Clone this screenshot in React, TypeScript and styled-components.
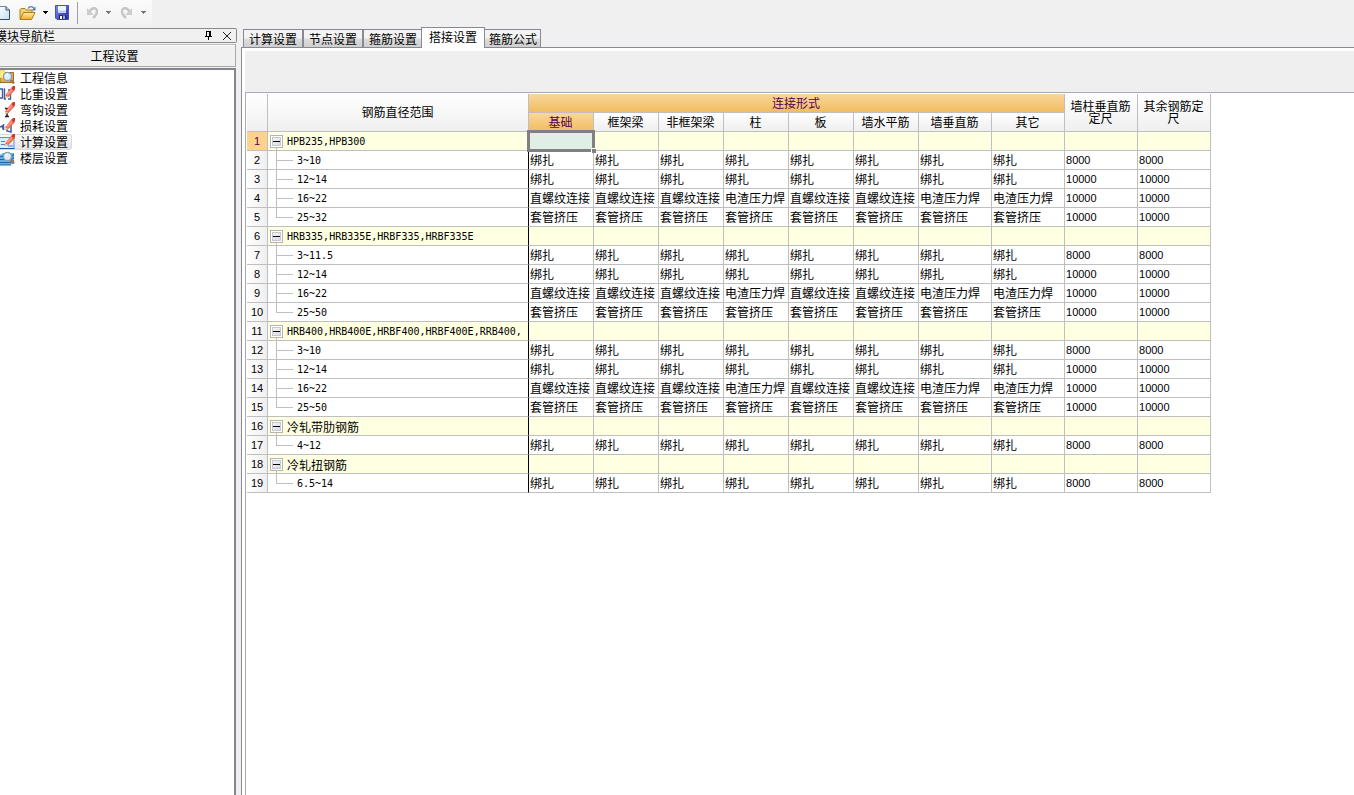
import React, { useState } from "react";
import styled, { createGlobalStyle, css } from "styled-components";

const LINE = "#bfbfbf";
const EDGE = "#888a93";
const HILITE = "linear-gradient(#f9d79a, #f0bd60)";

const GlobalStyle = createGlobalStyle`
  * { box-sizing: border-box; }
  body {
    margin: 0;
    background: #f0f0f0;
    color: #000;
    font: 12px/16px "Noto Sans CJK SC", sans-serif;
  }
  button {
    margin: 0;
    padding: 0;
    border: 0;
    background: none;
    color: inherit;
    font: inherit;
    white-space: nowrap;
  }
`;

const Shell = styled.div`
  display: flex;
  flex-direction: column;
  min-height: 100vh;
  overflow: hidden;
`;

const Toolbar = styled.div`
  display: flex;
  align-items: center;
  align-self: flex-start;
  width: 152px;
  height: 25px;
  margin-bottom: 2px;
  border-radius: 0 2px 2px 0;
  background: linear-gradient(#fbfbfb, #f2f2f2);
`;

const ToolButton = styled.button<{ $width: number }>`
  display: flex;
  flex: none;
  align-items: center;
  justify-content: center;
  width: ${(p) => p.$width}px;
  height: 24px;
  svg { flex: none; display: block; }
`;

const Separator = styled.div`
  flex: none;
  width: 1px;
  height: 22px;
  margin-right: 7px;
  background: #a0a0a0;
`;

const Main = styled.div`
  display: grid;
  flex: 1;
  grid-template-columns: 237px minmax(0, 1fr);
  column-gap: 4px;
`;

const Sidebar = styled.aside`
  display: flex;
  flex-direction: column;
  gap: 1px;
  min-width: 0;
  padding-top: 1px;
`;

const DockTitle = styled.header`
  display: flex;
  align-items: center;
  height: 15px;
  padding-right: 4px;
  border: 1px solid #8a8a8a;
  border-left: 0;
  border-radius: 0 2px 2px 0;
`;

const DockName = styled.h2`
  flex: 1;
  margin: 0 0 0 -5px;
  font-size: 12px;
  font-weight: 400;
  line-height: 12px;
`;

const DockButton = styled.button`
  width: 10px;
  height: 11px;
  margin-left: 8px;
  svg { display: block; }
`;

const GroupButton = styled.button`
  width: 236px;
  height: 23px;
  padding-right: 6px;
  border: 1px solid #a8a8a8;
  border-left: 0;
  border-top-color: #bcbcbc;
  box-shadow: inset 0 1px #fff;
`;

const Tree = styled.nav`
  display: flex;
  flex: 1;
  flex-direction: column;
  align-items: flex-start;
  width: 236px;
  border-top: 2px solid #83868f;
  border-right: 2px solid #83868f;
  background: #fff;
`;

const TreeItem = styled.button<{ $active: boolean }>`
  display: flex;
  align-items: center;
  gap: 4px;
  height: 16px;
  padding-right: 3px;
  border: 1px solid transparent;
  border-left: 0;
  border-radius: 0 3px 3px 0;
  svg { display: block; }
  ${(p) =>
    p.$active &&
    css`
      border-color: #d9d9d9;
      background: linear-gradient(#fafafa, #e6e6e6);
    `}
`;

const Workspace = styled.main`
  display: flex;
  flex-direction: column;
  min-width: 0;
`;

const TabStrip = styled.div`
  display: flex;
  align-items: flex-end;
  height: 20px;
  padding-left: 2px;
`;

const Tab = styled.button<{ $active: boolean }>`
  height: 18px;
  padding: 0 5px;
  border: 1px solid ${EDGE};
  border-bottom: 0;
  background: linear-gradient(#f3f3f3 45%, #dcdcdc 55%, #cfcfcf);
  line-height: 16px;
  &:last-child { padding-right: 3px; }
  ${(p) =>
    p.$active &&
    css`
      z-index: 1;
      height: 21px;
      margin: 0 -2px -1px;
      padding: 0 7px 2px;
      background: #fff;
    `}
`;

const TabPage = styled.section`
  display: flex;
  flex: 1;
  flex-direction: column;
  padding: 3px 0 0 3px;
  border: solid ${EDGE};
  border-width: 1px 0 0 1px;
  background: #fff;
`;

const OptionsBar = styled.div`
  height: 41px;
  background: #efefef;
`;

const GridFrame = styled.div`
  flex: 1;
  padding: 1px 0 0 1px;
  border: solid #a9aab3;
  border-width: 1px 0 0 1px;
  overflow: hidden;
`;

const Grid = styled.table`
  width: 964px;
  table-layout: fixed;
  border-collapse: separate;
  border-spacing: 0;
`;

const HeadCell = styled.th<{ $hot?: boolean }>`
  height: 19px;
  padding: 0 5px 1px 4px;
  border: solid ${LINE};
  border-width: 0 1px 1px 0;
  background: ${(p) => (p.$hot ? HILITE : "linear-gradient(#ffffff, #efefef)")};
  color: ${(p) => (p.$hot ? "#550055" : "#000")};
  font-weight: 400;
  line-height: 12px;
`;

const RowNumber = styled.th<{ $hot: boolean }>`
  height: 19px;
  padding: 0;
  border: solid ${LINE};
  border-width: 0 1px 1px 0;
  background: ${(p) => (p.$hot ? "#ffd28c" : "linear-gradient(90deg, #ffffff, #efefef)")};
  color: ${(p) => (p.$hot ? "#550055" : "#000")};
  font: 11px/18px "Liberation Sans", sans-serif;
`;

const Cell = styled.td<{ $group: boolean; $frozen?: boolean; $number?: boolean; $picked?: boolean }>`
  position: relative;
  height: 19px;
  padding: 0 0 0 1px;
  border: solid ${LINE};
  border-width: 0 1px 1px 0;
  ${(p) => p.$frozen && "border-right-color: #000;"}
  background: ${(p) => (p.$picked ? "#e0efe6" : p.$group ? "#ffffe1" : "#fff")};
  line-height: 18px;
  white-space: nowrap;
  ${(p) => p.$number && `font: 11px/18px "Liberation Sans", sans-serif;`}
`;

const Range = styled.div`
  display: flex;
  height: 18px;
  padding-left: 1px;
  font: 10px/20px "DejaVu Sans Mono", "Noto Sans CJK SC", monospace;
  svg { flex: none; display: block; }
`;

const RangeText = styled.span<{ $cjk?: boolean }>`
  margin-left: 4px;
  ${(p) => p.$cjk && `font: 12px/19px "Noto Sans CJK SC", sans-serif;`}
`;

const Knot = styled.div`
  display: flex;
  flex-direction: column;
  align-items: center;
  padding-top: 3px;
`;

const Stem = styled.div`
  width: 1px;
  height: 2px;
  background: ${LINE};
`;

const Expander = styled.button`
  display: grid;
  place-items: center;
  width: 13px;
  height: 13px;
  border: 1px solid #b4b4b8;
  background: linear-gradient(135deg, #ffffff, #cfd2da);
  box-shadow: inset 0 0 0 1px #fff, inset 0 0 0 2px #c6c8ce;
`;

const Dash = styled.span`
  width: 7px;
  height: 1px;
  background: #000;
`;

const Cursor = styled.div`
  position: absolute;
  z-index: 1;
  inset: -2px;
  border: 3px solid #808080;
`;

const FillHandle = styled.div`
  position: absolute;
  z-index: 2;
  right: -3px;
  bottom: -3px;
  width: 5px;
  height: 5px;
  border: solid #fff;
  border-width: 1px 0 0 1px;
  background: #808080;
`;

const Arrow = ({ color }: { color: string }) => (
  <svg width="5" height="3" shapeRendering="crispEdges"><path d="M0 0h5v1H0zM1 1h3v1H1zM2 2h1v1H2z" fill={color} /></svg>
);

const NewIcon = () => (
  <svg width="11" height="16" viewBox="0 0 11 16">
    <defs><linearGradient id="sheet" x2="1" y2="1"><stop stopColor="#fff" /><stop offset="1" stopColor="#c6dcf0" /></linearGradient></defs>
    <path d="M-2 1.5H6L9.5 5v9.5H-2z" fill="url(#sheet)" stroke="#6d8cab" />
    <path d="M6 1.5V5h3.5M9.5 5v9.5H-2" fill="none" stroke="#2c5272" />
  </svg>
);

const OpenIcon = () => (
  <svg width="17" height="16" viewBox="0 0 17 16">
    <defs><linearGradient id="folder" x2="0" y2="1"><stop stopColor="#fff0a8" /><stop offset="1" stopColor="#efa92c" /></linearGradient></defs>
    <path d="M1 14V4.5l1-1h4l1.500 1.500H13V8" fill="#f3cf70" stroke="#a8802e" />
    <path d="M1 14.500L4.500 7.500H16L12.500 14.500z" fill="url(#folder)" stroke="#b07a1c" />
    <path d="M9 3.500C10.500 1 13.500 1 15 3.500" fill="none" stroke="#5c7ba5" strokeWidth="1.300" />
    <path d="M16.500 1.500V5.500H12.500z" fill="#5c7ba5" />
  </svg>
);

const SaveIcon = () => (
  <svg width="14" height="15" viewBox="0 0 14 15">
    <defs><linearGradient id="disk" x2="1" y2="1"><stop stopColor="#7d8df2" /><stop offset="1" stopColor="#272aa5" /></linearGradient></defs>
    <path d="M.5 .5h13v14H2L.5 13z" fill="url(#disk)" stroke="#4a4eb8" />
    <path d="M3 1h8v7H3z" fill="#f0f4ff" />
    <path d="M3 5.500h8v2.500H3z" fill="#c4cff2" />
    <path d="M4 10h7v4.500H4z" fill="#20266f" />
    <path d="M5 11h2v3H5z" fill="#fff" />
    <path d="M8 10.500h2v3.500H8z" fill="#9ca9d0" />
  </svg>
);

const TurnIcon = ({ flip }: { flip?: boolean }) => (
  <svg width="13" height="13" viewBox="0 0 13 13">
    <g transform={flip ? "matrix(-1 0 0 1 13 0)" : undefined}>
      <path d="M3.500 6C5.500 1 11 1 11 5.500C11 8.500 9.500 10 7 12" fill="none" stroke="#c6c6c6" strokeWidth="2.400" />
      <path d="M1 2v7h7z" fill="#cdcdcd" />
    </g>
  </svg>
);

const PinIcon = () => (
  <svg width="9" height="11" shapeRendering="crispEdges"><path d="M2 1h5v1H2zM2 1h1v5H2zM5 1h2v5H5zM1 6h7v1H1zM4 7h1v3H4z" /></svg>
);

const CloseIcon = () => (
  <svg width="10" height="11"><path d="M1 2l8 8M9 2l-8 8" stroke="#222" strokeWidth="1" /></svg>
);

const Pencil = () => (
  <g>
    <path d="M5 9.500L11 2L14.500 4.500L8.500 11L5 12z" fill="#f06a58" />
    <path d="M7 9L12.500 3" stroke="#ff9d8c" strokeWidth="1.400" />
    <path d="M11 2L13 0H15V3L14 5z" fill="#cf3c2a" />
    <path d="M5 9.500L8.500 11L5 12z" fill="#e9d0a8" />
  </g>
);

const Magnifier = () => (
  <g>
    <path d="M10.500 10L14 13.500" stroke="#a8743a" strokeWidth="2.400" />
    <circle cx="7.500" cy="6.500" r="4" fill="#dceefb" stroke="#8a9cb0" strokeWidth="1.300" />
    <path d="M5.500 6a2.500 2.500 0 0 1 2.500-2" fill="none" stroke="#fff" strokeWidth="1.400" />
  </g>
);

const navArt: Record<string, React.ReactNode> = {
  工程信息: (
    <>
      <path d="M0 2.500h13.500v10H0z" fill="#dfb04a" stroke="#94702a" />
      <path d="M0 0h5v8H0z" fill="#ffd23c" />
      <path d="M2 0v8M0 4h5M0 1l4 6M4 1L0 7" stroke="#fff3a5" />
      <Magnifier />
    </>
  ),
  比重设置: (
    <>
      <path d="M0 3h2.500v9H0M5 3H4M4.500 3v10M4 13h2M8 4h2.500v9H8" fill="none" stroke="#3c5f9a" strokeWidth="1.400" />
      <Pencil />
    </>
  ),
  弯钩设置: (
    <>
      <path d="M5 6.500h4M7 6.500v8M5 14.500h4" fill="none" stroke="#222" strokeWidth="1.600" />
      <Pencil />
    </>
  ),
  损耗设置: (
    <>
      <path d="M0 9l2-1 1.500 4V6M7 8v5l4 1V7" fill="none" stroke="#3c5f9a" strokeWidth="1.500" />
      <Pencil />
    </>
  ),
  计算设置: (
    <>
      <path d="M-1 3.500h15v11H-1z" fill="#dcecff" stroke="#5b91de" />
      <path d="M1 7.500h4M1 10.500h4M8 12h5" stroke="#4b82cf" />
      <path d="M-1 14.500h15.500" stroke="#1f56a8" />
      <Pencil />
    </>
  ),
  楼层设置: (
    <>
      <path d="M0 5l3-2h11v9l-3 3H0z" fill="#69aee5" />
      <path d="M0 6.500h11l3-2M0 9.500h11l3-2M0 12.500h11l3-2M0 15h11" fill="none" stroke="#1e68af" strokeWidth="1.200" />
      <Magnifier />
    </>
  ),
};

const TABS = ["计算设置", "节点设置", "箍筋设置", "搭接设置", "箍筋公式"];
const KINDS = ["基础", "框架梁", "非框架梁", "柱", "板", "墙水平筋", "墙垂直筋", "其它"];
const COLUMN_WIDTHS = [21, 261, 65, 65, 65, 65, 65, 65, 73, 73, 73, 73];

const TIE = Array<string>(8).fill("绑扎");
const SLEEVE = Array<string>(8).fill("套管挤压");
const THREAD = ["直螺纹连接", "直螺纹连接", "直螺纹连接", "电渣压力焊", "直螺纹连接", "直螺纹连接", "电渣压力焊", "电渣压力焊"];

type Entry = { name: string; group?: boolean; cjk?: boolean; last?: boolean; values?: string[]; length?: string };

const group = (name: string, cjk = false): Entry => ({ name, group: true, cjk });
const range = (name: string, values: string[], length: string, last = false): Entry => ({ name, values, length, last });

const ENTRIES: Entry[] = [
  group("HPB235,HPB300"),
  range("3~10", TIE, "8000"),
  range("12~14", TIE, "10000"),
  range("16~22", THREAD, "10000"),
  range("25~32", SLEEVE, "10000", true),
  group("HRB335,HRB335E,HRBF335,HRBF335E"),
  range("3~11.5", TIE, "8000"),
  range("12~14", TIE, "10000"),
  range("16~22", THREAD, "10000"),
  range("25~50", SLEEVE, "10000", true),
  group("HRB400,HRB400E,HRBF400,HRBF400E,RRB400,"),
  range("3~10", TIE, "8000"),
  range("12~14", TIE, "10000"),
  range("16~22", THREAD, "10000"),
  range("25~50", SLEEVE, "10000", true),
  group("冷轧带肋钢筋", true),
  range("4~12", TIE, "8000", true),
  group("冷轧扭钢筋", true),
  range("6.5~14", TIE, "8000", true),
];

const Branch = ({ last }: { last?: boolean }) => (
  <svg width="23" height="18" shapeRendering="crispEdges">
    <path d={`M6 0h1v${last ? 10 : 18}h-1zM6 9h17v1H6z`} fill={LINE} />
  </svg>
);

const GridRow = ({ entry, index }: { entry: Entry; index: number }) => {
  const isGroup = !!entry.group;
  const values = entry.values ?? Array<string>(8).fill("");
  return (
    <tr>
      <RowNumber scope="row" $hot={index === 0}>{index + 1}</RowNumber>
      <Cell $group={isGroup} $frozen>
        <Range>
          {isGroup ? (
            <Knot>
              <Expander aria-label={`折叠 ${entry.name}`}><Dash /></Expander>
              <Stem />
            </Knot>
          ) : (
            <Branch last={entry.last} />
          )}
          <RangeText $cjk={entry.cjk}>{entry.name}</RangeText>
        </Range>
      </Cell>
      {values.map((value, i) => {
        const picked = index === 0 && i === 0;
        return (
          <Cell key={i} $group={isGroup} $picked={picked}>
            {value}
            {picked && <><Cursor /><FillHandle /></>}
          </Cell>
        );
      })}
      <Cell $group={isGroup} $number>{entry.length}</Cell>
      <Cell $group={isGroup} $number>{entry.length}</Cell>
    </tr>
  );
};

export default function App() {
  const [page, setPage] = useState("计算设置");
  const [tab, setTab] = useState("搭接设置");

  return (
    <Shell>
      <GlobalStyle />
      <Toolbar role="toolbar">
        <ToolButton $width={11} aria-label="新建"><NewIcon /></ToolButton>
        <ToolButton $width={33} aria-label="打开"><OpenIcon /></ToolButton>
        <ToolButton $width={3} aria-label="最近打开"><Arrow color="#000" /></ToolButton>
        <ToolButton $width={30} aria-label="保存"><SaveIcon /></ToolButton>
        <Separator />
        <ToolButton $width={14} aria-label="撤销"><TurnIcon /></ToolButton>
        <ToolButton $width={19} aria-label="撤销列表"><Arrow color="#777" /></ToolButton>
        <ToolButton $width={16} aria-label="恢复"><TurnIcon flip /></ToolButton>
        <ToolButton $width={18} aria-label="恢复列表"><Arrow color="#777" /></ToolButton>
      </Toolbar>
      <Main>
        <Sidebar>
          <DockTitle>
            <DockName>模块导航栏</DockName>
            <DockButton aria-label="固定"><PinIcon /></DockButton>
            <DockButton aria-label="关闭"><CloseIcon /></DockButton>
          </DockTitle>
          <GroupButton>工程设置</GroupButton>
          <Tree>
            {Object.keys(navArt).map((name) => (
              <TreeItem key={name} $active={name === page} onClick={() => setPage(name)}>
                <svg width="16" height="16" viewBox="0 0 16 16">{navArt[name]}</svg>
                {name}
              </TreeItem>
            ))}
          </Tree>
        </Sidebar>
        <Workspace>
          <TabStrip role="tablist">
            {TABS.map((name) => (
              <Tab key={name} role="tab" aria-selected={name === tab} $active={name === tab} onClick={() => setTab(name)}>
                {name}
              </Tab>
            ))}
          </TabStrip>
          <TabPage>
            <OptionsBar />
            <GridFrame>
              <Grid>
                <colgroup>
                  {COLUMN_WIDTHS.map((width, i) => <col key={i} width={width} />)}
                </colgroup>
                <thead>
                  <tr>
                    <HeadCell rowSpan={2} />
                    <HeadCell rowSpan={2}>钢筋直径范围</HeadCell>
                    <HeadCell colSpan={8} $hot>连接形式</HeadCell>
                    <HeadCell rowSpan={2}>墙柱垂直筋定尺</HeadCell>
                    <HeadCell rowSpan={2}>其余钢筋定尺</HeadCell>
                  </tr>
                  <tr>
                    {KINDS.map((kind, i) => <HeadCell key={kind} $hot={i === 0}>{kind}</HeadCell>)}
                  </tr>
                </thead>
                <tbody>
                  {ENTRIES.map((entry, i) => <GridRow key={i} entry={entry} index={i} />)}
                </tbody>
              </Grid>
            </GridFrame>
          </TabPage>
        </Workspace>
      </Main>
    </Shell>
  );
}
